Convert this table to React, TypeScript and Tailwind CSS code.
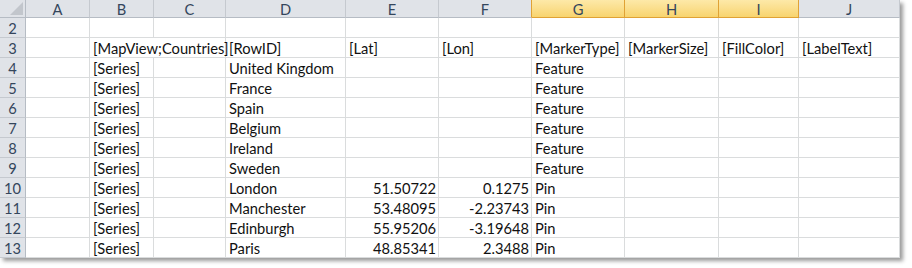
import React from "react";

const font = { fontFamily: "Lato, 'Open Sans', sans-serif" };

type Cell = { t?: string; right?: boolean; span?: number };

const letters = ["A", "B", "C", "D", "E", "F", "G", "H", "I", "J"];
const selected = new Set(["G", "H", "I"]);

const countries = ["United Kingdom", "France", "Spain", "Belgium", "Ireland", "Sweden"];
const cities: [string, string, string][] = [
  ["London", "51.50722", "0.1275"],
  ["Manchester", "53.48095", "-2.23743"],
  ["Edinburgh", "55.95206", "-3.19648"],
  ["Paris", "48.85341", "2.3488"],
];

function makeRows(): { n: number; cells: Cell[] }[] {
  const rows: { n: number; cells: Cell[] }[] = [];
  rows.push({ n: 2, cells: Array.from({ length: 10 }, () => ({})) });
  rows.push({
    n: 3,
    cells: [
      {},
      { t: "[MapView;Countries]", span: 2 },
      { t: "[RowID]" },
      { t: "[Lat]" },
      { t: "[Lon]" },
      { t: "[MarkerType]" },
      { t: "[MarkerSize]" },
      { t: "[FillColor]" },
      { t: "[LabelText]" },
    ],
  });
  countries.forEach((c, i) => {
    rows.push({
      n: 4 + i,
      cells: [{}, { t: "[Series]" }, {}, { t: c }, {}, {}, { t: "Feature" }, {}, {}, {}],
    });
  });
  cities.forEach(([c, lat, lon], i) => {
    rows.push({
      n: 10 + i,
      cells: [
        {},
        { t: "[Series]" },
        {},
        { t: c },
        { t: lat, right: true },
        { t: lon, right: true },
        { t: "Pin" },
        {},
        {},
        {},
      ],
    });
  });
  return rows;
}

export default function App() {
  const rows = makeRows();
  return (
    <div className="w-[912px] h-[268px] bg-white" style={font}>
      <div className="w-[900px] bg-white shadow-[3px_3px_4px_rgba(0,0,0,0.4)]">
        <div className="grid grid-cols-[26px_64px_64px_72px_120px_93px_93px_93px_94px_80px_101px] text-[14.7px] text-[#111]">
          {/* header row */}
          <div className="h-[18px] bg-[#e0e3e8] border-r border-b border-[#b6bcc4] flex items-end justify-end">
            <svg width="13" height="13" viewBox="0 0 13 13" className="mb-[2px] mr-[2px]">
              <polygon points="13,0 13,13 0,13" fill="#c2c6cc" />
            </svg>
          </div>
          {letters.map((l) =>
            selected.has(l) ? (
              <div
                key={l}
                className="h-[18px] pt-[1px] bg-gradient-to-b from-[#fde9a8] to-[#f8d46e] border-r border-b border-[#e0a235] flex items-center justify-center text-[#34465c] leading-none"
              >
                {l}
              </div>
            ) : (
              <div
                key={l}
                className={`h-[18px] pt-[1px] bg-[#e0e3e8] border-r border-b ${
                  l === "F" ? "border-r-[#e0a235]" : "border-r-[#c5c9cf]"
                } border-b-[#b6bcc4] flex items-center justify-center text-[#34465c] leading-none`}
              >
                {l}
              </div>
            )
          )}
          {rows.map((r) => (
            <React.Fragment key={r.n}>
              <div className="h-[20px] pt-[2px] bg-[#e0e3e8] border-r border-b border-r-[#b6bcc4] border-b-[#c5c9cf] flex items-center justify-center text-[#34465c] leading-none">
                {r.n}
              </div>
              {r.cells.map((c, i) => (
                <div
                  key={i}
                  className={`h-[20px] pt-[2px] border-r border-b border-[#dadcdd] flex items-center whitespace-nowrap overflow-visible leading-none ${
                    c.span === 2 ? "col-span-2" : ""
                  } ${c.right ? "justify-end pr-[2px]" : "pl-[3px]"}`}
                >
                  {c.t ?? ""}
                </div>
              ))}
            </React.Fragment>
          ))}
        </div>
      </div>
    </div>
  );
}
